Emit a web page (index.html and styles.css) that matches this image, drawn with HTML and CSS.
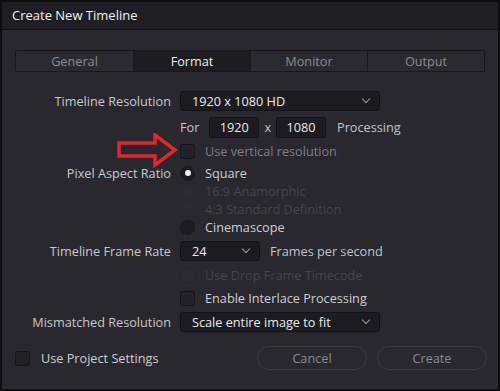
FILE: index.html
```html
<!DOCTYPE html>
<html>
<head>
<meta charset="utf-8">
<link rel="stylesheet" href="styles.css">
</head>
<body>
<div class="dialog">
  <div class="titlebar">Create New Timeline</div>
  <div class="content">
    <div class="tabs">
      <div class="tab">General</div>
      <div class="tab active">Format</div>
      <div class="tab">Monitor</div>
      <div class="tab">Output</div>
    </div>

    <div class="form">
      <div class="row r1">
        <div class="label">Timeline Resolution</div>
        <div class="ctrl"><div class="select wide"><span>1920 x 1080 HD</span><span class="chev"></span></div></div>
      </div>
      <div class="row r2">
        <div class="label"></div>
        <div class="ctrl">
          <span class="txt">For</span>
          <div class="input first">1920</div>
          <span class="txt x">x</span>
          <div class="input">1080</div>
          <span class="txt proc">Processing</span>
        </div>
      </div>
      <div class="row r3">
        <div class="label"></div>
        <div class="ctrl"><span class="check"></span><span class="opt dim">Use vertical resolution</span></div>
      </div>
      <div class="row r4">
        <div class="label">Pixel Aspect Ratio</div>
        <div class="ctrl"><span class="radio on"></span><span class="opt">Square</span></div>
      </div>
      <div class="row r5">
        <div class="label"></div>
        <div class="ctrl"><span class="radio off"></span><span class="opt disabled">16:9 Anamorphic</span></div>
      </div>
      <div class="row r6">
        <div class="label"></div>
        <div class="ctrl"><span class="radio off"></span><span class="opt disabled">4:3 Standard Definition</span></div>
      </div>
      <div class="row r7">
        <div class="label"></div>
        <div class="ctrl"><span class="radio"></span><span class="opt">Cinemascope</span></div>
      </div>
      <div class="row r8">
        <div class="label">Timeline Frame Rate</div>
        <div class="ctrl"><div class="select narrow"><span>24</span><span class="chev"></span></div><span class="txt fps">Frames per second</span></div>
      </div>
      <div class="row r9">
        <div class="label"></div>
        <div class="ctrl"><span class="check off"></span><span class="opt disabled">Use Drop Frame Timecode</span></div>
      </div>
      <div class="row r10">
        <div class="label"></div>
        <div class="ctrl"><span class="check"></span><span class="opt">Enable Interlace Processing</span></div>
      </div>
      <div class="row r11">
        <div class="label">Mismatched Resolution</div>
        <div class="ctrl"><div class="select wide"><span>Scale entire image to fit</span><span class="chev"></span></div></div>
      </div>
    </div>

    <div class="footer">
      <div class="project"><span class="check"></span><span class="opt">Use Project Settings</span></div>
      <div class="buttons">
        <div class="btn">Cancel</div>
        <div class="btn">Create</div>
      </div>
    </div>
  </div>

  <svg class="arrow" width="70" height="40" viewBox="0 0 70 40">
    <polygon points="3,10 39,10 39,2 59,17 39,32 39,23 3,23" fill="none" stroke="#e3262b" stroke-width="3.5" stroke-linejoin="miter"/>
  </svg>
</div>
</body>
</html>
```

FILE: styles.css
```css
* { box-sizing: border-box; }
html, body { margin: 0; padding: 0; }
body {
  width: 500px;
  height: 391px;
  background: #0e0e10;
  font-family: "Open Sans", "Noto Sans", sans-serif;
  font-size: 12.7px;
  overflow: hidden;
}
.dialog {
  position: relative;
  margin: 2px 2px 0 2px;
  width: 496px;
  height: 387px;
  background: #28282e;
  display: flex;
  flex-direction: column;
}
.titlebar {
  height: 28px;
  background: #1f1e23;
  border-bottom: 1px solid #141417;
  color: #f2f2f2;
  font-size: 13px;
  padding-left: 10px;
  line-height: 26px;
  flex: none;
}
.content {
  padding: 20px 13px 0 13px;
  display: flex;
  flex-direction: column;
}
.tabs {
  display: grid;
  grid-template-columns: repeat(4, 1fr);
  height: 22px;
  border: 1px solid #18181b;
  border-radius: 2px;
  width: 470px;
}
.tab {
  background: #2a2a30;
  color: #8a8a8e;
  text-align: center;
  line-height: 20px;
  border-left: 1px solid #18181b;
}
.tab:first-child { border-left: none; }
.tab.active {
  background: #1d1c21;
  color: #ececec;
}
.form {
  display: flex;
  flex-direction: column;
  margin-top: 18px;
}
.row {
  display: grid;
  grid-template-columns: 156px 1fr;
  column-gap: 9px;
  align-items: center;
}
.r1 { height: 22px; }
.r2 { height: 22px; margin-top: 4px; }
.r3 { height: 16px; margin-top: 4px; }
.r4 { height: 18px; margin-top: 6px; }
.r5, .r6, .r7 { height: 18px; }
.r8 { height: 22px; margin-top: 4px; }
.r9 { height: 18px; margin-top: 4px; }
.r10 { height: 18px; margin-top: 5px; }
.r11 { height: 22px; margin-top: 4px; }
.label {
  text-align: right;
  color: #c9c9cc;
  white-space: nowrap;
}
.ctrl {
  display: flex;
  align-items: center;
  color: #c9c9cc;
  white-space: nowrap;
}
.select {
  height: 20px;
  background: #1c1c20;
  border: 1px solid #141417;
  border-radius: 3px;
  color: #ebebeb;
  display: flex;
  align-items: center;
  justify-content: space-between;
  padding: 0 10px 0 11px;
}
.select.wide { width: 200px; }
.select.narrow { width: 80px; }
.chev {
  width: 6px;
  height: 6px;
  border-right: 1.5px solid #9a9a9e;
  border-bottom: 1.5px solid #9a9a9e;
  transform: rotate(45deg);
  margin-top: -4px;
}
.txt { color: #c4c4c8; }
.input {
  width: 50px;
  height: 21px;
  background: #1c1c20;
  border: 1px solid #141417;
  border-radius: 2px;
  color: #ebebeb;
  text-align: center;
  line-height: 19px;
}
.input.first { margin-left: 10px; }
.x { margin-left: 5px; margin-right: 5px; }
.proc { margin-left: 11px; }
.fps { margin-left: 10px; }
.check {
  width: 15px;
  height: 15px;
  background: #222226;
  border: 1px solid #151518;
  border-radius: 2px;
  flex: none;
}
.check.off { background: #29292f; border-color: #25252a; }
.radio {
  width: 15px;
  height: 15px;
  border-radius: 50%;
  background: #1d1d21;
  border: 1px solid #19191c;
  flex: none;
  display: flex;
  align-items: center;
  justify-content: center;
}
.radio.on::after {
  content: "";
  width: 6px;
  height: 6px;
  border-radius: 50%;
  background: #f2f2f2;
}
.radio.off { background: #29292e; border-color: #27272c; }
.opt {
  margin-left: 10px;
  color: #cfcfd2;
}
.opt.dim { color: #7e7e84; }
.opt.disabled { color: #45454b; }
.footer {
  display: flex;
  justify-content: space-between;
  align-items: center;
  margin-top: 13px;
  width: 472px;
}
.project {
  display: flex;
  align-items: center;
}
.project .opt { margin-left: 11px; }
.buttons {
  display: flex;
  gap: 10px;
}
.btn {
  width: 110px;
  height: 24px;
  border: 1px solid #3b3b41;
  border-radius: 12px;
  color: #8a8a8e;
  text-align: center;
  line-height: 22px;
}
.arrow {
  position: absolute;
  left: 114px;
  top: 131px;
}
```
